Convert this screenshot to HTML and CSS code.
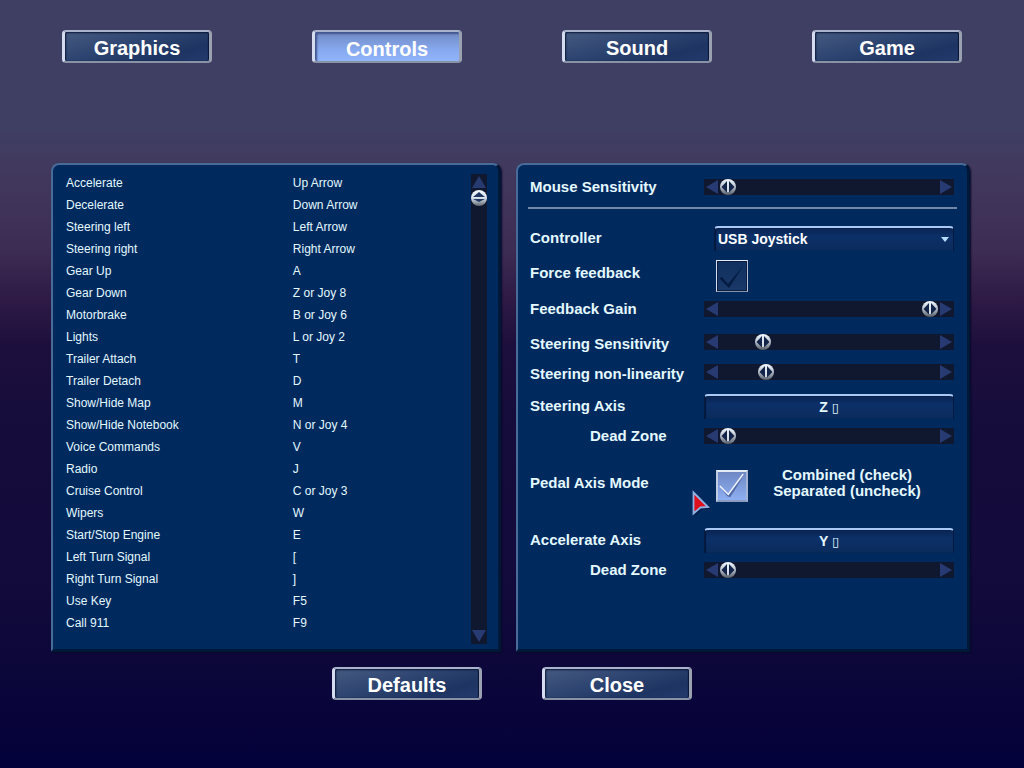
FILE: index.html
```html
<!DOCTYPE html>
<html lang="en">
<head>
<meta charset="utf-8">
<title>Controls</title>
<link rel="stylesheet" href="styles.css">
</head>
<body>
<svg class="defs" width="0" height="0" aria-hidden="true">
  <symbol id="arrow" viewBox="0 0 12 14"><path d="M0 7 L12 0 V14 Z" fill="#273a72"/></symbol>
</svg>

<nav class="tabs">
  <button class="btn" type="button">Graphics</button>
  <button class="btn btn-active" type="button">Controls</button>
  <button class="btn" type="button">Sound</button>
  <button class="btn" type="button">Game</button>
</nav>

<main class="panels">
  <section class="panel bindings">
    <table class="keys">
      <tbody>
        <tr><td>Accelerate</td><td>Up Arrow</td></tr>
        <tr><td>Decelerate</td><td>Down Arrow</td></tr>
        <tr><td>Steering left</td><td>Left Arrow</td></tr>
        <tr><td>Steering right</td><td>Right Arrow</td></tr>
        <tr><td>Gear Up</td><td>A</td></tr>
        <tr><td>Gear Down</td><td>Z or Joy 8</td></tr>
        <tr><td>Motorbrake</td><td>B or Joy 6</td></tr>
        <tr><td>Lights</td><td>L or Joy 2</td></tr>
        <tr><td>Trailer Attach</td><td>T</td></tr>
        <tr><td>Trailer Detach</td><td>D</td></tr>
        <tr><td>Show/Hide Map</td><td>M</td></tr>
        <tr><td>Show/Hide Notebook</td><td>N or Joy 4</td></tr>
        <tr><td>Voice Commands</td><td>V</td></tr>
        <tr><td>Radio</td><td>J</td></tr>
        <tr><td>Cruise Control</td><td>C or Joy 3</td></tr>
        <tr><td>Wipers</td><td>W</td></tr>
        <tr><td>Start/Stop Engine</td><td>E</td></tr>
        <tr><td>Left Turn Signal</td><td>[</td></tr>
        <tr><td>Right Turn Signal</td><td>]</td></tr>
        <tr><td>Use Key</td><td>F5</td></tr>
        <tr><td>Call 911</td><td>F9</td></tr>
      </tbody>
    </table>
    <div class="scroll">
      <button class="step" type="button" aria-label="Scroll up"><svg class="up" width="12" height="14"><use href="#arrow"/></svg></button>
      <input class="range range-vertical" type="range" min="0" max="100" value="0" aria-label="Scroll position">
      <button class="step" type="button" aria-label="Scroll down"><svg class="down" width="12" height="14"><use href="#arrow"/></svg></button>
    </div>
  </section>

  <form class="panel settings">
    <label for="mouse">Mouse Sensitivity</label>
    <div class="slider">
      <button class="step" type="button" aria-label="Less"><svg width="12" height="14"><use href="#arrow"/></svg></button>
      <input class="range" id="mouse" type="range" min="0" max="100" value="0">
      <button class="step" type="button" aria-label="More"><svg class="right" width="12" height="14"><use href="#arrow"/></svg></button>
    </div>

    <hr class="rule">

    <label for="controller">Controller</label>
    <select class="field select" id="controller"><option>USB Joystick</option></select>

    <label class="raised" for="force">Force feedback</label>
    <div class="check-row"><input class="check" id="force" type="checkbox"></div>

    <label for="gain">Feedback Gain</label>
    <div class="slider">
      <button class="step" type="button" aria-label="Less"><svg width="12" height="14"><use href="#arrow"/></svg></button>
      <input class="range" id="gain" type="range" min="0" max="100" value="100">
      <button class="step" type="button" aria-label="More"><svg class="right" width="12" height="14"><use href="#arrow"/></svg></button>
    </div>

    <label class="lowered" for="sens">Steering Sensitivity</label>
    <div class="slider">
      <button class="step" type="button" aria-label="Less"><svg width="12" height="14"><use href="#arrow"/></svg></button>
      <input class="range" id="sens" type="range" min="0" max="200" value="35">
      <button class="step" type="button" aria-label="More"><svg class="right" width="12" height="14"><use href="#arrow"/></svg></button>
    </div>

    <label class="lowered" for="linear">Steering non-linearity</label>
    <div class="slider">
      <button class="step" type="button" aria-label="Less"><svg width="12" height="14"><use href="#arrow"/></svg></button>
      <input class="range" id="linear" type="range" min="0" max="200" value="38">
      <button class="step" type="button" aria-label="More"><svg class="right" width="12" height="14"><use href="#arrow"/></svg></button>
    </div>

    <label for="steer-axis">Steering Axis</label>
    <button class="field" id="steer-axis" type="button">Z <span class="box">▯</span></button>

    <label class="indent" for="steer-dead">Dead Zone</label>
    <div class="slider">
      <button class="step" type="button" aria-label="Less"><svg width="12" height="14"><use href="#arrow"/></svg></button>
      <input class="range" id="steer-dead" type="range" min="0" max="100" value="0">
      <button class="step" type="button" aria-label="More"><svg class="right" width="12" height="14"><use href="#arrow"/></svg></button>
    </div>

    <label class="raised" for="pedal">Pedal Axis Mode</label>
    <div class="check-row">
      <input class="check" id="pedal" type="checkbox" checked>
      <p class="hint">Combined (check)<br>Separated (uncheck)</p>
    </div>

    <label for="accel-axis">Accelerate Axis</label>
    <button class="field" id="accel-axis" type="button">Y <span class="box">▯</span></button>

    <label class="indent" for="accel-dead">Dead Zone</label>
    <div class="slider">
      <button class="step" type="button" aria-label="Less"><svg width="12" height="14"><use href="#arrow"/></svg></button>
      <input class="range" id="accel-dead" type="range" min="0" max="100" value="0">
      <button class="step" type="button" aria-label="More"><svg class="right" width="12" height="14"><use href="#arrow"/></svg></button>
    </div>
  </form>
</main>

<footer class="actions">
  <button class="btn" type="button">Defaults</button>
  <button class="btn" type="button">Close</button>
</footer>

<svg class="pointer" width="20" height="28" viewBox="0 0 20 28" aria-hidden="true">
  <path d="M3 4 L19 19 L10 19 L3 26 Z" fill="#000a30" opacity=".5"/>
  <path d="M1.500 2.500 L16 17 L8.500 17.500 L1.500 23.500 Z" fill="#e0101c" stroke="#8fb0e0" stroke-width="1.800"/>
</svg>
</body>
</html>
```
FILE: styles.css
```css
* { box-sizing: border-box; }

body {
  margin: 0;
  min-height: 100vh;
  padding: 30px 0;
  font: 12px/22px "Liberation Sans", Arial, sans-serif;
  color: #e4f8ff;
  background: linear-gradient(#3f3e63 0, #3f3e63 130px, #42395e 170px, #3d2c54 250px, #2e1a45 300px, #1d0f3d 345px, #150c3b 430px, #130b3b 560px, #0e083a 650px, #03013a 768px);
}

button, input, select { margin: 0; font: inherit; color: inherit; }
.defs { position: absolute; }

.tabs { display: flex; justify-content: space-between; padding: 0 62px; }

.btn {
  width: 150px;
  height: 33px;
  padding: 2px 0 0;
  border: 2px solid;
  border-width: 2px 3px 2px 3px;
  border-color: #a9b4cc #9aa2b2 #8a93a6 #d5dcf0;
  border-radius: 4px;
  font-size: 20px;
  line-height: 26px;
  font-weight: bold;
  color: #fff;
  background: linear-gradient(165deg, #465a80 0, #2f4672 40%, #1e3462 75%, #233a6c 100%);
  box-shadow: inset 1px 1px 2px #0b1738, inset -1px 0 1px #0b1738;
}
.btn-active {
  padding-top: 4px;
  background: linear-gradient(#7189c2, #86a8ee 60%, #90b4fa);
  box-shadow: inset 2px 2px 2px #40558c;
}

.panels {
  display: grid;
  grid-template-columns: 450fr 454fr;
  gap: 15px;
  padding: 100px 54px 0 51px;
}
.panel {
  border: solid;
  border-width: 2px 3px 3px 2px;
  border-color: #486b98 #001838 #001838 #486b98;
  border-radius: 8px 8px 2px 2px;
  background: #002a5e;
  box-shadow: 1px 1px 2px #080828;
}

.bindings { display: flex; justify-content: space-between; padding: 7px 11px 5px 13px; }
.keys { flex: 1; align-self: flex-start; margin-bottom: 10px; border-collapse: collapse; table-layout: fixed; }
.keys td { height: 22px; padding: 0; }
.keys td:first-child { width: 56%; }

.scroll { display: flex; flex-direction: column; align-items: center; width: 16px; margin-top: 2px; background: #10182f; }
.step { display: flex; align-items: center; justify-content: center; flex: none; width: 16px; height: 16px; padding: 0; border: 0; background: none; }
.up { transform: rotate(90deg); }
.down { transform: rotate(-90deg); }
.right { transform: scaleX(-1); }

.slider { display: flex; align-items: center; width: 250px; height: 16px; background: #10182f; }
.range { flex: 1; appearance: none; min-width: 0; height: 16px; background: none; }
.range-vertical { writing-mode: vertical-lr; width: 16px; min-height: 0; }
.range::-webkit-slider-thumb {
  appearance: none;
  width: 16px;
  height: 16px;
  background: url("data:image/svg+xml,%3Csvg xmlns='http://www.w3.org/2000/svg' viewBox='0 0 16 16'%3E%3Cdefs%3E%3ClinearGradient id='g' x2='0' y2='1'%3E%3Cstop stop-color='%23f4faff'/%3E%3Cstop offset='.5' stop-color='%23b4becc'/%3E%3Cstop offset='1' stop-color='%23565c64'/%3E%3C/linearGradient%3E%3C/defs%3E%3Ccircle cx='8' cy='8' r='8' fill='url(%23g)'/%3E%3Cpath d='M7 2V13.500L1.500 8ZM9 2V13.500L14.500 8Z' fill='%23122448'/%3E%3Cpath d='M8 1V13' stroke='%23e8f0fa' stroke-width='1.500'/%3E%3C/svg%3E");
}
.range-vertical::-webkit-slider-thumb {
  background: url("data:image/svg+xml,%3Csvg xmlns='http://www.w3.org/2000/svg' viewBox='0 0 16 16'%3E%3Cdefs%3E%3ClinearGradient id='g' x2='0' y2='1'%3E%3Cstop stop-color='%23f4faff'/%3E%3Cstop offset='.5' stop-color='%23d8e2ee'/%3E%3Cstop offset='1' stop-color='%2360666e'/%3E%3C/linearGradient%3E%3C/defs%3E%3Ccircle cx='8' cy='8' r='8' fill='url(%23g)'/%3E%3Cpath d='M2 7H14L8 2ZM2 9H14L8 12Z' fill='%23223860'/%3E%3C/svg%3E");
}

.settings {
  display: grid;
  grid-template-columns: 1fr 250px;
  grid-template-rows: 26px 16px 44px 32px 34px 32px 28px 40px 20px 80px 28px 32px;
  align-content: start;
  align-items: center;
  padding: 9px 13px 0 12px;
  font-size: 15px;
  line-height: 16px;
  font-weight: bold;
}
.raised { padding-bottom: 6px; }
.lowered { padding-top: 4px; }
.indent { padding-left: 60px; }

.rule { grid-column: 1 / -1; height: 2px; margin: 0 -3px 0 -2px; border: 0; background: #7187a6; }

.field {
  height: 25px;
  padding: 0;
  border: 0 solid #061a40;
  border-width: 2px 1px 0;
  border-top-color: #a9c8f4;
  border-radius: 4px 4px 0 0;
  font-size: 14px;
  background: linear-gradient(#082450, #0c3068 35%, #0a2b5c);
  box-shadow: inset 1px 0 1px #02183c;
}
.box { font: 13px "DejaVu Sans", sans-serif; }
.select {
  justify-self: end;
  width: 240px;
  appearance: none;
  padding: 0 3px;
  color: #fff;
  background: url("data:image/svg+xml,%3Csvg xmlns='http://www.w3.org/2000/svg' width='8' height='5'%3E%3Cpath d='M0 0H8L4 5Z' fill='%23b8dcff'/%3E%3C/svg%3E") no-repeat right 4px center, linear-gradient(#082450, #0c3068 35%, #0a2b5c);
}

.check-row { display: flex; align-items: center; padding-left: 12px; }
.check {
  flex: none;
  appearance: none;
  width: 32px;
  height: 32px;
  border: 1px solid;
  border-color: #e4ecf8 #b4c0d4 #8494ac #d0dcf0;
  background: url("data:image/svg+xml,%3Csvg xmlns='http://www.w3.org/2000/svg' viewBox='0 0 30 30'%3E%3Cpath d='M2 17L5 16L11 23L26 5L12 27Z' fill='%23041c42'/%3E%3C/svg%3E"), linear-gradient(#0f3060, #1a3868);
  box-shadow: inset 0 0 0 1px #0a1c40;
}
.check:checked {
  border-color: #e4ecf8 #a4b4d4 #8c9cc0 #c0cce4;
  border-width: 2px;
  background: url("data:image/svg+xml,%3Csvg xmlns='http://www.w3.org/2000/svg' viewBox='0 0 30 30'%3E%3Cpath d='M3 17L11 24L27 5L13 27L10 26Z' fill='%23506aa4'/%3E%3Cpath d='M2 15L11 24L27 2' fill='none' stroke='%23f4f6ff' stroke-width='1.500'/%3E%3C/svg%3E"), linear-gradient(#6f88c4, #8eaff2);
  box-shadow: none;
}
.hint { flex: 1; margin: 0; padding: 0 8px 6px 0; text-align: center; }

.actions { display: flex; justify-content: center; gap: 60px; padding-top: 15px; }

.pointer { position: absolute; left: 692px; top: 490px; }
```
